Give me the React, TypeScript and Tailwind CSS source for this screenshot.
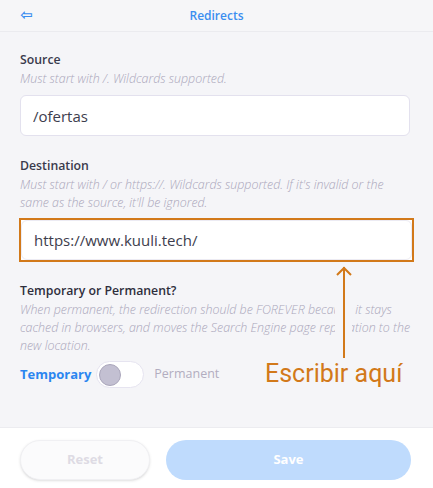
export default function App() {
  return (
    <div
      className="relative flex h-[488px] w-[433px] flex-col overflow-hidden bg-[#f5f5f8]"
      style={{ fontFamily: '"Open Sans", "Liberation Sans", sans-serif' }}
    >
      {/* header */}
      <header className="relative flex h-[32px] items-center justify-center border-b border-[#ebebef] bg-[#f6f6f8]">
        <span className="absolute left-[20px] top-[5px] text-[15px] font-bold leading-5 text-[#3b8ef0]" style={{ fontFamily: '"DejaVu Sans", sans-serif' }}>⇦</span>
        <span className="text-[12px] font-semibold text-[#3b8ef0]">Redirects</span>
      </header>

      <main className="flex-1 px-5 pt-[18px]">
        <label className="block text-[12.3px] font-semibold leading-5 text-[#3a3a4c]">Source</label>
        <p className="text-[12.4px] font-light italic leading-[18px] text-[#aaa6ba]">Must start with /. Wildcards supported.</p>
        <input
          readOnly
          value="/ofertas"
          className="mt-[7px] h-[41px] w-[390px] rounded-md border border-[#e3e1ee] bg-white px-3 text-[15px] text-[#3d3d4d] outline-none"
        />

        <label className="mt-5 block text-[12.3px] font-semibold leading-5 text-[#3a3a4c]">Destination</label>
        <p className="text-[12.4px] font-light italic leading-[18px] text-[#aaa6ba]">
          Must start with / or https://. Wildcards supported. If it's invalid or the same as the source, it'll be ignored.
        </p>
        <div className="-mx-px mt-[6px] border-2 border-[#d2791a] bg-white">
          <input
            readOnly
            value="https://www.kuuli.tech/"
            className="h-[40px] w-full rounded-md border border-[#ecebf3] bg-white px-3 text-[15px] text-[#3d3d4d] outline-none"
          />
        </div>

        <label className="mt-[19px] block text-[12.3px] font-semibold leading-5 text-[#2e2e3c]">Temporary or Permanent?</label>
        <p className="text-[12.4px] font-light italic leading-[18px] text-[#aaa6ba]">
          When permanent, the redirection should be FOREVER because it stays cached in browsers, and moves the Search Engine page reputation to the new location.
        </p>
        <div className="mt-[6px] flex items-center gap-[5px]">
          <span className="text-[13px] font-bold text-[#2b86f0]">Temporary</span>
          <span className="flex h-[27px] w-[48px] items-center rounded-full border border-[#e6e4f0] bg-white px-[2px]">
            <span className="h-[22px] w-[22px] rounded-full border border-[#aaa6bb] bg-[#c3c0d2]" />
          </span>
          <span className="ml-[5px] text-[12.5px] text-[#b2adc0]">Permanent</span>
        </div>
      </main>

      <footer className="flex h-[61px] gap-4 border-t border-[#ececf0] bg-white pl-5 pr-[22px] pt-[12px]">
        <button className="h-[40px] w-[130px] rounded-full border border-[#f0f0f3] bg-[#fbfbfc] text-[13px] font-bold text-[#dedbe4] shadow-sm">
          Reset
        </button>
        <button className="h-[40px] flex-1 rounded-full bg-[#bfdbfd] text-[13px] font-bold text-white">
          Save
        </button>
      </footer>

      {/* annotation */}
      <div className="absolute left-[335px] top-[296px] h-[50px] w-[17px] bg-[#f5f5f8]" />
      <svg className="absolute left-[335px] top-[265px]" width="18" height="94" viewBox="0 0 18 94">
        <path d="M9 2 V93" stroke="#d2791a" strokeWidth="2" fill="none" />
        <path d="M2 10 L9 3 L16 10" stroke="#d2791a" strokeWidth="2" fill="none" />
      </svg>
      <span
        className="absolute left-[265px] top-[358px] text-[25px] leading-8 text-[#d2791a]"
        style={{ fontFamily: 'Roboto, "Liberation Sans", sans-serif' }}
      >
        Escribir aquí
      </span>
    </div>
  )
}
